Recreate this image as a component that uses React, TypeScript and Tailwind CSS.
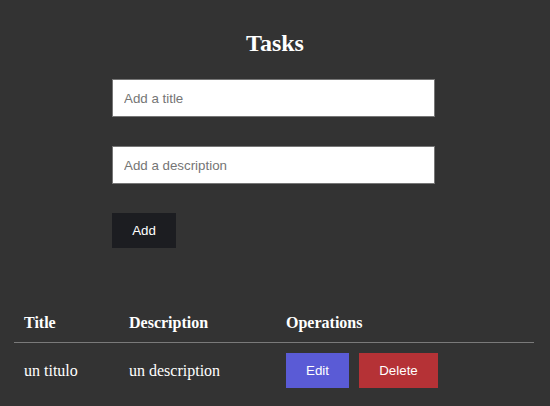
import React, { useState } from 'react';

interface Task {
  id: number;
  title: string;
  description: string;
}

export default function App() {
  const [tasks] = useState<Task[]>([{ id: 1, title: 'un titulo', description: 'un description' }]);

  return (
    <div className="min-h-[406px] w-full bg-[#333333] pt-[29px] pb-4 text-white font-['Liberation_Serif',serif]">
      <h2 className="text-center text-[24px] leading-[28px] font-bold">Tasks</h2>

      {/* Form */}
      <form className="ml-[112px] mt-[22px] flex w-[323px] flex-col items-start gap-[29px] font-['Liberation_Sans',Arial,sans-serif]">
        <input
          type="text"
          placeholder="Add a title"
          className="h-[38px] w-full border border-[#767676] bg-white px-[11px] text-[13.33px] text-black placeholder:text-[#757575] outline-none"
        />
        <input
          type="text"
          placeholder="Add a description"
          className="h-[38px] w-full border border-[#767676] bg-white px-[11px] text-[13.33px] text-black placeholder:text-[#757575] outline-none"
        />
        <button type="button" className="h-[35px] w-[64px] bg-[#1c1d21] text-[13.33px] text-white">
          Add
        </button>
      </form>

      {/* Table */}
      <table className="mx-[14px] mt-[56px] w-[520px] border-collapse text-[16px] leading-[18px]">
        <thead>
          <tr className="border-b border-[#7a7a7a]">
            <th className="w-[105px] py-[10px] pl-[10px] text-left font-bold">Title</th>
            <th className="w-[157px] py-[10px] pl-[10px] text-left font-bold">Description</th>
            <th className="py-[10px] pl-[10px] text-left font-bold">Operations</th>
          </tr>
        </thead>
        <tbody>
          {tasks.map((task) => (
            <tr key={task.id}>
              <td className="py-[10px] pl-[10px] align-middle">{task.title}</td>
              <td className="py-[10px] pl-[10px] align-middle">{task.description}</td>
              <td className="py-[10px] pl-[10px] align-middle">
                <div className="flex gap-[10px] font-['Liberation_Sans',Arial,sans-serif] text-[13.33px]">
                  <button type="button" className="h-[35px] w-[63px] bg-[#5a5bd6] text-white">
                    Edit
                  </button>
                  <button type="button" className="h-[35px] w-[79px] bg-[#b53236] text-white">
                    Delete
                  </button>
                </div>
              </td>
            </tr>
          ))}
        </tbody>
      </table>
    </div>
  );
}
